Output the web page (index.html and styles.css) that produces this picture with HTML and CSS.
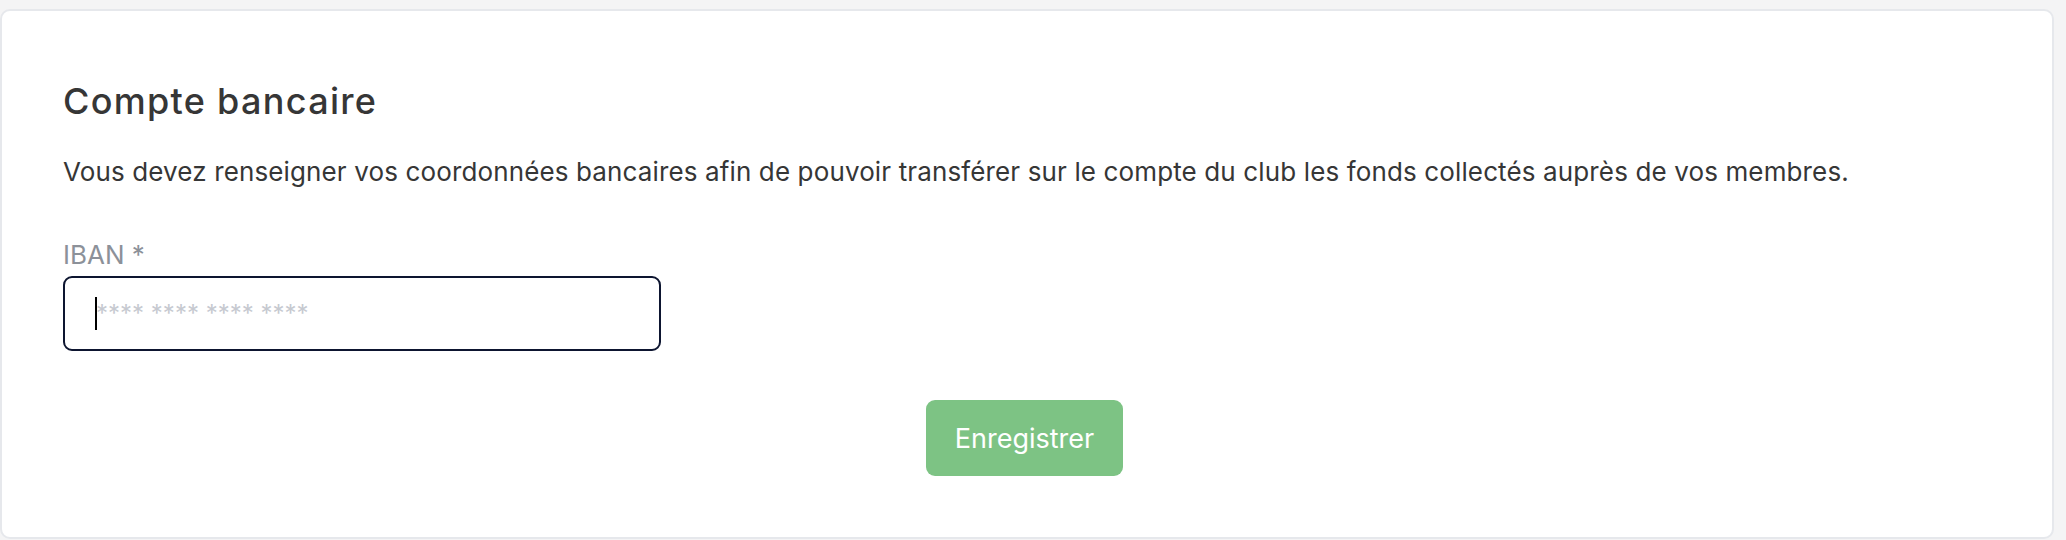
FILE: index.html
```html
<!DOCTYPE html>
<html>
  <head>
    <title>Compte bancaire</title>
    <link rel="stylesheet" href="styles.css">
  </head>
  <body>
    <div class="card">
      <h2>Compte bancaire</h2>
      <p class="intro">
        Vous devez renseigner vos coordonnées bancaires afin de pouvoir transférer sur le compte du club les fonds collectés auprès de vos membres.
      </p>

      <form class="bank-form" onsubmit="return false;">
        <label for="iban">IBAN *</label>
        <div class="field">
          <span class="caret"></span>
          <input type="text" id="iban" placeholder="**** **** **** ****" />
        </div>

        <div class="actions">
          <button type="submit">Enregistrer</button>
        </div>
      </form>
    </div>
  </body>
</html>
```

FILE: styles.css
```css
/* Bank account settings card */
body {
  margin: 0;
  font-family: Inter, "Liberation Sans", sans-serif;
  background-color: #f4f4f5;
  color: #363636;
}

.card {
  margin: 9px 12px 0 0;
  padding: 70px 66px 61px 61px;
  background-color: #fff;
  border: 2px solid #e6e8ec;
  border-radius: 10px;
}

h2 {
  margin: 0;
  font-size: 36px;
  line-height: 40px;
  font-weight: 500;
  letter-spacing: 1.3px;
  color: #363636;
}

.intro {
  margin: 33px 0 0 0;
  font-size: 26px;
  line-height: 36px;
  letter-spacing: 0.13px;
}

.bank-form {
  margin-top: 47px;
}

label {
  display: block;
  font-size: 26px;
  line-height: 36px;
  color: #8c9199;
}

.field {
  position: relative;
  width: 598px;
  margin-top: 3px;
}

input[type="text"] {
  box-sizing: border-box;
  width: 100%;
  height: 75px;
  padding: 0 31px;
  font-family: inherit;
  font-size: 24px;
  color: #363636;
  border: 2px solid #0d1530;
  border-radius: 9px;
  outline: none;
}

input::placeholder {
  color: #c6c9d0;
}

/* fake text cursor, drawn over the input */
.caret {
  position: absolute;
  left: 32px;
  top: 21px;
  width: 2px;
  height: 33px;
  background-color: #000;
}

.actions {
  display: flex;
  justify-content: center;
  margin-top: 49px;
}

button {
  width: 197px;
  height: 76px;
  font-family: inherit;
  font-size: 27px;
  color: #fff;
  background-color: #7dc384;
  border: none;
  border-radius: 9px;
  cursor: pointer;
}
```
